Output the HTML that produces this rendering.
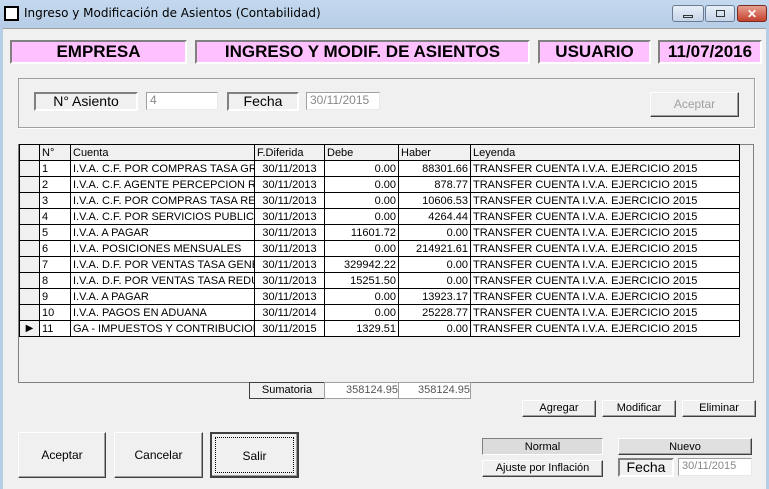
<!DOCTYPE html><html><head><style>
body{margin:0;width:769px;height:489px;overflow:hidden;background:#f0f0f0;font-family:"Liberation Sans",sans-serif;position:relative}
.a{position:absolute;box-sizing:border-box}
.pink{background:#ffc0ff;border:2px solid;border-color:#808080 #fff #fff #808080;font-weight:bold;font-size:17px;text-align:center;line-height:20px}
.lbl{border:2px solid;border-color:#808080 #fff #fff #808080;font-size:14px;text-align:center;line-height:15px;background:#f0f0f0}
.inp{background:#fff;border:1px solid;border-color:#a0a0a0 #e8e8e8 #e8e8e8 #a0a0a0;color:#888;font-size:12px;padding-left:3px;line-height:15px}
.btn{background:#f0f0f0;border:1px solid;border-color:#fff #404040 #404040 #fff;box-shadow:inset -1px -1px #a0a0a0;font-size:12px;text-align:center}
table{border-collapse:collapse;font-size:11px}
td{border:1px solid #000;height:15px;padding:0 2px;white-space:nowrap;overflow:hidden;line-height:14px}
.r{text-align:right}
tr td:nth-child(4){text-align:center}
tr:first-child td:nth-child(4){text-align:left}
</style></head><body>
<div class="a" style="left:0;top:0;width:769px;height:28px;background:linear-gradient(#c4d9ee,#b6cde6)"></div>
<div class="a" style="left:4px;top:6px;width:15px;height:15px;border:2px solid #000;background:#fff"></div>
<div class="a" style="left:24px;top:6px;font-size:12px;font-family:'DejaVu Sans',sans-serif">Ingreso y Modificación de Asientos (Contabilidad)</div>
<div class="a" style="left:672px;top:5px;width:32px;height:17px;border:1px solid #6a7c93;border-radius:3px;background:linear-gradient(#e8f0f9,#c6d5e8)"><div class="a" style="left:10px;top:9px;width:10px;height:3px;border:1px solid #333"></div></div>
<div class="a" style="left:705px;top:5px;width:30px;height:17px;border:1px solid #6a7c93;border-radius:3px;background:linear-gradient(#e8f0f9,#c6d5e8)"><div class="a" style="left:10px;top:4px;width:9px;height:7px;border:1px solid #333"></div></div>
<div class="a" style="left:737px;top:5px;width:30px;height:17px;border:1px solid #7a2a20;border-radius:3px;background:linear-gradient(#e8a090,#c2412c);color:#fff;font-weight:bold;font-size:12px;text-align:center;line-height:16px">✕</div>
<div class="a" style="left:0;top:28px;width:3px;height:461px;background:#b6cde6"></div>
<div class="a" style="left:766px;top:28px;width:3px;height:461px;background:#b6cde6"></div>
<div class="a" style="left:3px;top:28px;width:763px;height:1px;background:#a0a0a0"></div>

<div class="a pink" style="left:10px;top:40px;width:177px;height:24px">EMPRESA</div>
<div class="a pink" style="left:195px;top:40px;width:335px;height:24px">INGRESO Y MODIF. DE ASIENTOS</div>
<div class="a pink" style="left:538px;top:40px;width:113px;height:24px">USUARIO</div>
<div class="a pink" style="left:658px;top:40px;width:104px;height:24px">11/07/2016</div>

<div class="a" style="left:18px;top:78px;width:737px;height:50px;border:1px solid #a0a0a0;box-shadow:1px 1px #fff"></div>
<div class="a lbl" style="left:34px;top:92px;width:104px;height:19px">N° Asiento</div>
<div class="a inp" style="left:146px;top:92px;width:72px;height:18px">4</div>
<div class="a lbl" style="left:227px;top:92px;width:72px;height:19px">Fecha</div>
<div class="a inp" style="left:306px;top:92px;width:74px;height:18px">30/11/2015</div>
<div class="a btn" style="left:650px;top:92px;width:89px;height:25px;line-height:23px;color:#a0a0a0">Aceptar</div>

<div class="a" style="left:18px;top:144px;width:736px;height:239px;background:#f0f0f0;border:1px solid #808080"></div>
<div class="a" style="left:19px;top:144px;width:720px;height:193px;background:#fff"></div>
<table class="a" style="left:19px;top:144px;table-layout:fixed;width:720px">
<colgroup><col style="width:20px"><col style="width:31px"><col style="width:184px"><col style="width:70px"><col style="width:74px"><col style="width:72px"><col style="width:269px"></colgroup>
<tr style="background:#f0f0f0"><td></td><td>N°</td><td>Cuenta</td><td>F.Diferida</td><td>Debe</td><td>Haber</td><td>Leyenda</td></tr>
<tr><td style="background:#f0f0f0"></td><td>1</td><td>I.V.A. C.F. POR COMPRAS TASA GRAL</td><td>30/11/2013</td><td class="r">0.00</td><td class="r">88301.66</td><td>TRANSFER CUENTA I.V.A. EJERCICIO 2015</td></tr>
<tr><td style="background:#f0f0f0"></td><td>2</td><td>I.V.A. C.F. AGENTE PERCEPCION RG 3</td><td>30/11/2013</td><td class="r">0.00</td><td class="r">878.77</td><td>TRANSFER CUENTA I.V.A. EJERCICIO 2015</td></tr>
<tr><td style="background:#f0f0f0"></td><td>3</td><td>I.V.A. C.F. POR COMPRAS TASA RED</td><td>30/11/2013</td><td class="r">0.00</td><td class="r">10606.53</td><td>TRANSFER CUENTA I.V.A. EJERCICIO 2015</td></tr>
<tr><td style="background:#f0f0f0"></td><td>4</td><td>I.V.A. C.F. POR SERVICIOS PUBLICOS</td><td>30/11/2013</td><td class="r">0.00</td><td class="r">4264.44</td><td>TRANSFER CUENTA I.V.A. EJERCICIO 2015</td></tr>
<tr><td style="background:#f0f0f0"></td><td>5</td><td>I.V.A. A PAGAR</td><td>30/11/2013</td><td class="r">11601.72</td><td class="r">0.00</td><td>TRANSFER CUENTA I.V.A. EJERCICIO 2015</td></tr>
<tr><td style="background:#f0f0f0"></td><td>6</td><td>I.V.A. POSICIONES MENSUALES</td><td>30/11/2013</td><td class="r">0.00</td><td class="r">214921.61</td><td>TRANSFER CUENTA I.V.A. EJERCICIO 2015</td></tr>
<tr><td style="background:#f0f0f0"></td><td>7</td><td>I.V.A. D.F. POR VENTAS TASA GENE</td><td>30/11/2013</td><td class="r">329942.22</td><td class="r">0.00</td><td>TRANSFER CUENTA I.V.A. EJERCICIO 2015</td></tr>
<tr><td style="background:#f0f0f0"></td><td>8</td><td>I.V.A. D.F. POR VENTAS TASA REDU</td><td>30/11/2013</td><td class="r">15251.50</td><td class="r">0.00</td><td>TRANSFER CUENTA I.V.A. EJERCICIO 2015</td></tr>
<tr><td style="background:#f0f0f0"></td><td>9</td><td>I.V.A. A PAGAR</td><td>30/11/2013</td><td class="r">0.00</td><td class="r">13923.17</td><td>TRANSFER CUENTA I.V.A. EJERCICIO 2015</td></tr>
<tr><td style="background:#f0f0f0"></td><td>10</td><td>I.V.A. PAGOS EN ADUANA</td><td>30/11/2014</td><td class="r">0.00</td><td class="r">25228.77</td><td>TRANSFER CUENTA I.V.A. EJERCICIO 2015</td></tr>
<tr><td style="background:#f0f0f0;font-size:10px;text-align:center">▶</td><td>11</td><td>GA - IMPUESTOS Y CONTRIBUCIONES</td><td>30/11/2015</td><td class="r">1329.51</td><td class="r">0.00</td><td>TRANSFER CUENTA I.V.A. EJERCICIO 2015</td></tr>
</table>

<div class="a" style="left:249px;top:382px;width:76px;height:17px;border:1px solid #404040;font-size:11px;text-align:center;line-height:15px">Sumatoria</div>
<div class="a" style="left:324px;top:382px;width:75px;height:17px;border:1px solid #a0a0a0;background:#fff;font-size:11px;text-align:right;line-height:15px;color:#555">358124.95</div>
<div class="a" style="left:398px;top:382px;width:73px;height:17px;border:1px solid #a0a0a0;background:#fff;font-size:11px;text-align:right;line-height:15px;color:#555">358124.95</div>

<div class="a btn" style="left:522px;top:400px;width:74px;height:17px;line-height:15px;font-size:11px">Agregar</div>
<div class="a btn" style="left:602px;top:400px;width:74px;height:17px;line-height:15px;font-size:11px">Modificar</div>
<div class="a btn" style="left:682px;top:400px;width:74px;height:17px;line-height:15px;font-size:11px">Eliminar</div>

<div class="a btn" style="left:18px;top:432px;width:88px;height:46px;line-height:44px">Aceptar</div>
<div class="a btn" style="left:114px;top:432px;width:89px;height:46px;line-height:44px">Cancelar</div>
<div class="a btn" style="left:210px;top:432px;width:89px;height:46px;line-height:44px;border:2px solid #404040"><div class="a" style="left:3px;top:3px;right:3px;bottom:3px;border:1px dotted #000"></div>Salir</div>

<div class="a" style="left:482px;top:438px;width:121px;height:17px;border:1px solid;border-color:#808080 #fff #fff #808080;background:#dcdcdc;font-size:11px;text-align:center;line-height:17px">Normal</div>
<div class="a btn" style="left:482px;top:460px;width:121px;height:17px;line-height:15px;font-size:11px">Ajuste por Inflación</div>
<div class="a btn" style="left:618px;top:438px;width:134px;height:17px;line-height:17px;font-size:11px;background:#e0e0e0">Nuevo</div>
<div class="a lbl" style="left:618px;top:458px;width:56px;height:19px">Fecha</div>
<div class="a inp" style="left:678px;top:458px;width:74px;height:18px;font-size:11px">30/11/2015</div>
</body></html>
